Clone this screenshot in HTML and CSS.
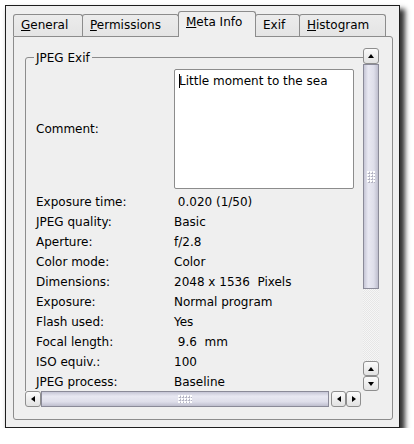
FILE: index.html
```html
<!DOCTYPE html>
<html>
<head>
<meta charset="utf-8">
<link rel="stylesheet" href="styles.css">
</head>
<body>
<div class="window">
  <div class="tabbar">
    <div class="tab t-general"><u>G</u>eneral</div>
    <div class="tab t-perm"><u>P</u>ermissions</div>
    <div class="tab t-meta active"><u>M</u>eta Info</div>
    <div class="tab t-exif">Exif</div>
    <div class="tab t-hist"><u>H</u>istogram</div>
  </div>
  <div class="panel">
    <div class="scrollview">
      <div class="viewport">
        <fieldset class="group">
          <legend>JPEG Exif</legend>
          <div class="rows">
            <div class="label comment-label">Comment:</div>
            <div class="textarea"><span class="caret"></span>Little moment to the sea</div>
            <div class="label">Exposure time:</div><div class="value"> 0.020 (1/50)</div>
            <div class="label">JPEG quality:</div><div class="value">Basic</div>
            <div class="label">Aperture:</div><div class="value">f/2.8</div>
            <div class="label">Color mode:</div><div class="value">Color</div>
            <div class="label">Dimensions:</div><div class="value">2048 x 1536  Pixels</div>
            <div class="label">Exposure:</div><div class="value">Normal program</div>
            <div class="label">Flash used:</div><div class="value">Yes</div>
            <div class="label">Focal length:</div><div class="value"> 9.6  mm</div>
            <div class="label">ISO equiv.:</div><div class="value">100</div>
            <div class="label">JPEG process:</div><div class="value">Baseline</div>
          </div>
        </fieldset>
      </div>
      <div class="vscroll">
        <div class="btn btn-top"><span class="arrow up"></span></div>
        <div class="thumb vthumb">
          <svg class="grip" width="8" height="12" viewBox="0 0 8 12">
            <g fill="#b4b4c2"><rect x="1" y="1" width="2" height="2"/><rect x="4" y="1" width="2" height="2"/><rect x="7" y="1" width="1" height="2"/><rect x="1" y="4" width="2" height="2"/><rect x="4" y="4" width="2" height="2"/><rect x="7" y="4" width="1" height="2"/><rect x="1" y="7" width="2" height="2"/><rect x="4" y="7" width="2" height="2"/><rect x="7" y="7" width="1" height="2"/><rect x="1" y="10" width="2" height="2"/><rect x="4" y="10" width="2" height="2"/><rect x="7" y="10" width="1" height="2"/></g>
            <g fill="#ffffff"><rect x="0" y="0" width="2" height="2"/><rect x="3" y="0" width="2" height="2"/><rect x="6" y="0" width="2" height="2"/><rect x="0" y="3" width="2" height="2"/><rect x="3" y="3" width="2" height="2"/><rect x="6" y="3" width="2" height="2"/><rect x="0" y="6" width="2" height="2"/><rect x="3" y="6" width="2" height="2"/><rect x="6" y="6" width="2" height="2"/><rect x="0" y="9" width="2" height="2"/><rect x="3" y="9" width="2" height="2"/><rect x="6" y="9" width="2" height="2"/></g>
          </svg>
        </div>
        <div class="track vtrack"></div>
        <div class="btn btn-small"><span class="arrow up"></span></div>
        <div class="btn btn-small"><span class="arrow down"></span></div>
      </div>
      <div class="hscroll">
        <div class="btn btn-left"><span class="arrow left"></span></div>
        <div class="thumb hthumb">
          <svg class="grip" width="14" height="8" viewBox="0 0 14 8">
            <g fill="#b4b4c2"><rect x="1" y="1" width="2" height="2"/><rect x="4" y="1" width="2" height="2"/><rect x="7" y="1" width="2" height="2"/><rect x="10" y="1" width="2" height="2"/><rect x="13" y="1" width="1" height="2"/><rect x="1" y="4" width="2" height="2"/><rect x="4" y="4" width="2" height="2"/><rect x="7" y="4" width="2" height="2"/><rect x="10" y="4" width="2" height="2"/><rect x="13" y="4" width="1" height="2"/><rect x="1" y="7" width="2" height="1"/><rect x="4" y="7" width="2" height="1"/><rect x="7" y="7" width="2" height="1"/><rect x="10" y="7" width="2" height="1"/></g>
            <g fill="#ffffff"><rect x="0" y="0" width="2" height="2"/><rect x="3" y="0" width="2" height="2"/><rect x="6" y="0" width="2" height="2"/><rect x="9" y="0" width="2" height="2"/><rect x="12" y="0" width="2" height="2"/><rect x="0" y="3" width="2" height="2"/><rect x="3" y="3" width="2" height="2"/><rect x="6" y="3" width="2" height="2"/><rect x="9" y="3" width="2" height="2"/><rect x="12" y="3" width="2" height="2"/><rect x="0" y="6" width="2" height="2"/><rect x="3" y="6" width="2" height="2"/><rect x="6" y="6" width="2" height="2"/><rect x="9" y="6" width="2" height="2"/><rect x="12" y="6" width="2" height="2"/></g>
          </svg>
        </div>
        <div class="hgap"></div>
        <div class="btn btn-hsmall"><span class="arrow left"></span></div>
        <div class="btn btn-hsmall"><span class="arrow right"></span></div>
      </div>
      <div class="corner"></div>
    </div>
  </div>
</div>
</body>
</html>
```
FILE: styles.css
```css
html, body {
  margin: 0;
  padding: 0;
  background: #ffffff;
}
body {
  font-family: "DejaVu Sans", sans-serif;
  font-size: 12px;
  color: #000;
}
.window {
  margin: 5px 0 0 5px;
  width: 395px;
  height: 423px;
  box-sizing: border-box;
  border: 1px solid #1e1e1e;
  background: #efefef;
  box-shadow: 4px 5px 5px 1px rgba(0, 0, 0, 0.8);
  padding: 0 6px 7px 7px;
  display: flex;
  flex-direction: column;
}
.tabbar {
  margin-top: 5px;
  height: 26px;
  margin-bottom: -1px;
  display: flex;
  align-items: flex-start;
  position: relative;
  z-index: 1;
}
.tab {
  box-sizing: border-box;
  height: 22px;
  margin-top: 3px;
  border: 1px solid #8c8c8c;
  border-bottom: none;
  border-radius: 3px 3px 0 0;
  background: linear-gradient(#ececec, #e4e4e4);
  padding: 3px 0 0 7px;
  line-height: 14px;
  white-space: nowrap;
}
.tab + .tab { margin-left: -1px; }
.tab u { text-decoration: underline; text-underline-offset: 1px; }
.t-general { width: 70px; }
.t-perm { width: 97px; }
.t-meta { width: 78px; }
.t-exif { width: 45px; }
.t-hist { width: 87px; }
.tab.active {
  height: 26px;
  margin-top: 0;
  background: #efefef;
  padding-top: 3px;
  position: relative;
  z-index: 2;
}
.panel {
  box-sizing: border-box;
  height: 384px;
  border: 1px solid #8c8c8c;
  border-radius: 0 3px 3px 3px;
  padding: 11px 0 0 11px;
}
.scrollview {
  display: grid;
  grid-template-columns: 338px 16px;
  grid-template-rows: 343px 16px;
}
.viewport {
  overflow: hidden;
}
.group {
  margin: 1px 0 0 0;
  padding: 4px 0 0 10px;
  width: 360px;
  height: 400px;
  box-sizing: border-box;
  border: 1px solid #8c8c8c;
  border-radius: 3px;
  min-width: 0;
}
.group legend {
  margin-left: -2px;
  padding: 2px 2px 0 2px;
  line-height: 14px;
}
.rows {
  display: grid;
  grid-template-columns: 138px auto;
  line-height: 20px;
}
.label, .value {
  white-space: pre;
  height: 20px;
}
.comment-label {
  align-self: center;
  margin-bottom: 3px;
}
.textarea {
  box-sizing: border-box;
  width: 180px;
  height: 120px;
  margin-bottom: 3px;
  background: #fff;
  border: 1px solid #8c8c8c;
  border-radius: 2px;
  padding: 4px 4px 0 4px;
  line-height: 14px;
  white-space: nowrap;
}
.caret {
  display: inline-block;
  width: 1px;
  height: 14px;
  background: #000;
  margin-right: -1px;
  vertical-align: top;
}
.vscroll {
  display: flex;
  flex-direction: column;
}
.hscroll {
  display: flex;
}
.btn {
  box-sizing: border-box;
  border: 1px solid #8e8e8e;
  border-radius: 3px;
  background: linear-gradient(#fbfbfb, #e2e2e2);
  display: flex;
  align-items: center;
  justify-content: center;
  flex: none;
}
.btn-top { height: 16px; }
.btn-small { height: 15px; }
.btn-left { width: 16px; }
.btn-hsmall { width: 15px; }
.arrow {
  width: 0;
  height: 0;
  border-style: solid;
  border-color: transparent;
}
.arrow.up {
  border-width: 0 3px 4px 3px;
  border-bottom-color: #000;
}
.arrow.down {
  border-width: 4px 3px 0 3px;
  border-top-color: #000;
}
.arrow.left {
  border-width: 3px 4px 3px 0;
  border-right-color: #000;
}
.arrow.right {
  border-width: 3px 0 3px 4px;
  border-left-color: #000;
}
.thumb {
  box-sizing: border-box;
  border: 1px solid #8a8a98;
  display: flex;
  align-items: center;
  justify-content: center;
  flex: none;
}
.vthumb {
  height: 225px;
  background: linear-gradient(to right, #c6c6d6, #e8e8f2 30%, #dedeea 70%, #bebece);
}
.hthumb {
  width: 288px;
  background: linear-gradient(#c6c6d6, #e8e8f2 30%, #dedeea 70%, #bebece);
}
.grip {
  display: block;
}
.vtrack {
  height: 72px;
  flex: none;
  background: repeating-conic-gradient(#f6f6f6 0 25%, #e6e6e6 0 50%) 0 0 / 2px 2px;
}
.hgap {
  width: 2px;
  flex: none;
}
```
